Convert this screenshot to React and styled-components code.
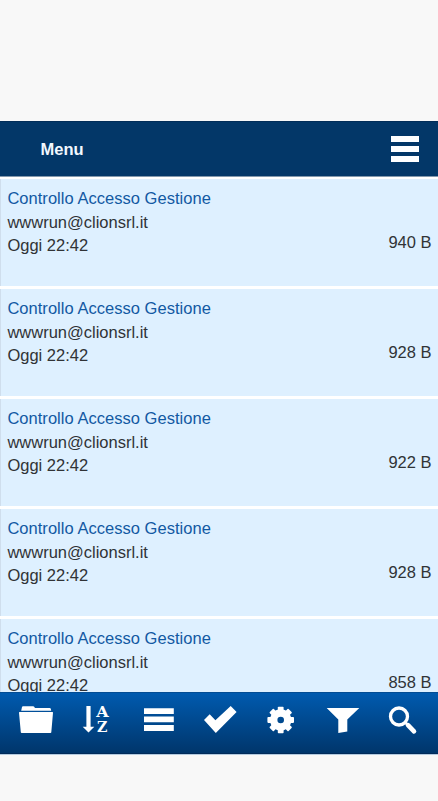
import React from "react";
import styled, { createGlobalStyle } from "styled-components";

const messages = [
  { id: 1, subject: "Controllo Accesso Gestione", from: "wwwrun@clionsrl.it", date: "Oggi 22:42", size: "940 B" },
  { id: 2, subject: "Controllo Accesso Gestione", from: "wwwrun@clionsrl.it", date: "Oggi 22:42", size: "928 B" },
  { id: 3, subject: "Controllo Accesso Gestione", from: "wwwrun@clionsrl.it", date: "Oggi 22:42", size: "922 B" },
  { id: 4, subject: "Controllo Accesso Gestione", from: "wwwrun@clionsrl.it", date: "Oggi 22:42", size: "928 B" },
  { id: 5, subject: "Controllo Accesso Gestione", from: "wwwrun@clionsrl.it", date: "Oggi 22:42", size: "858 B" },
];

const teeth = [0, 45, 90, 135, 180, 225, 270, 315];

const tools = [
  {
    name: "Cartelle",
    icon: (
      <>
        <path d="M16.2 18.8 L17 14.9 Q17.2 14.2 18 14.2 H28 Q29 14.2 29.4 15 L29.9 16 H44.6 Q45.6 16 45.8 16.8 L46.2 18.8 Z" />
        <path d="M14.6 20 H47.4 Q48.1 20 48 20.7 L46.3 40.3 Q46.2 41 45.5 41 H16.6 Q15.9 41 15.8 40.3 L14 20.7 Q13.9 20 14.6 20 Z" />
      </>
    ),
  },
  {
    name: "Ordina",
    icon: (
      <>
        <path d="M20.4 14 H24.6 V34.7 H28.3 L22.5 40.4 L16.7 34.7 H20.4 Z" />
        <Letter x="30.2" y="25.2" textLength="12.4">A</Letter>
        <Letter x="30.9" y="40" textLength="10.4">Z</Letter>
      </>
    ),
  },
  {
    name: "Elenco",
    icon: <path d="M17 16.3 h29.8 v5.8 h-29.8 z M17 24.5 h29.8 v5.8 h-29.8 z M17 33 h29.8 v6 h-29.8 z" />,
  },
  {
    name: "Seleziona",
    icon: <path d="M16 28 L21.7 22.3 L27.4 28.3 L42.7 14 L48.6 20 L27.8 41 Z" />,
  },
  {
    name: "Impostazioni",
    icon: (
      <>
        {teeth.map((angle) => (
          <rect key={angle} x="28.8" y="14.7" width="5.8" height="6" rx="0.8" transform={`rotate(${angle} 31.7 28)`} />
        ))}
        <circle cx="31.7" cy="28" r="7" fill="none" stroke="#fff" strokeWidth="7.4" />
      </>
    ),
  },
  {
    name: "Filtra",
    icon: <path d="M16.7 16 H49.3 L37.3 27.5 V39.4 L28.3 41 V27.5 Z" />,
  },
  {
    name: "Cerca",
    icon: (
      <>
        <circle cx="28" cy="24.5" r="8.5" fill="none" stroke="#fff" strokeWidth="3.3" />
        <path d="M34.3 30.5 L37 33" stroke="#fff" strokeWidth="2.6" />
        <path d="M37 33.2 L43 39.4" stroke="#fff" strokeWidth="4.6" strokeLinecap="round" />
      </>
    ),
  },
];

function Letter({ children, ...rest }) {
  return (
    <SortLetter lengthAdjust="spacingAndGlyphs" {...rest}>
      {children}
    </SortLetter>
  );
}

function Message({ subject, from, date, size }) {
  return (
    <Row>
      <Details>
        <Subject>{subject}</Subject>
        <p>{from}</p>
        <p>{date}</p>
      </Details>
      <Size>{size}</Size>
    </Row>
  );
}

function App() {
  return (
    <Page>
      <GlobalStyle />
      <Header>
        <Title>Menu</Title>
        <MenuButton aria-label="Menu">
          <span />
          <span />
          <span />
        </MenuButton>
      </Header>
      <List>
        {messages.map((message) => (
          <Message key={message.id} {...message} />
        ))}
      </List>
      <Toolbar>
        {tools.map((tool) => (
          <Tool key={tool.name} aria-label={tool.name}>
            <svg width="61" height="62" viewBox="0 0 61 62" fill="#fff">
              {tool.icon}
            </svg>
          </Tool>
        ))}
      </Toolbar>
    </Page>
  );
}

const GlobalStyle = createGlobalStyle`
  * {
    box-sizing: border-box;
  }
  body {
    margin: 0;
    background: #f8f8f8;
  }
  p, h1, h2 {
    margin: 0;
  }
`;
const Page = styled.div`
  display: flex;
  flex-direction: column;
  height: 801px;
  padding: 121px 0 47px;
  overflow: hidden;
  background: #f8f8f8;
  color: #303336;
  font-family: "Liberation Sans", Arial, sans-serif;
  font-size: 16.5px;
  line-height: 23.5px;
`;
const Header = styled.header`
  display: flex;
  flex: none;
  align-items: center;
  justify-content: space-between;
  height: 56px;
  padding: 0 19px 0 40.5px;
  background: #033768;
  border-top: 1px solid #022d58;
  border-bottom: 1px solid #8298ad;
`;
const Title = styled.h1`
  padding-top: 1px;
  color: #f2f8ff;
  font-size: 16.5px;
  font-weight: bold;
`;
const MenuButton = styled.button`
  display: flex;
  flex-direction: column;
  gap: 4px;
  width: 28px;
  padding: 0;
  border: 0;
  background: none;
  span {
    height: 6px;
    background: #fff;
  }
`;
const List = styled.main`
  flex: 1;
  min-height: 0;
  overflow: hidden;
  padding-top: 2px;
  background: #fff;
`;
const Row = styled.article`
  display: flex;
  justify-content: space-between;
  height: 107px;
  margin-bottom: 3px;
  padding: 8px 6.5px 0 6.4px;
  background: #def0ff;
  border-left: 1px solid #cfdeed;
`;
const Details = styled.div`
  display: flex;
  flex-direction: column;
`;
const Subject = styled.h2`
  color: #1259a3;
  font-size: inherit;
  font-weight: normal;
  letter-spacing: 0.03px;
`;
const Size = styled.span`
  padding-top: 44px;
`;
const Toolbar = styled.nav`
  display: grid;
  flex: none;
  grid-template-columns: repeat(7, 61px);
  height: 62px;
  padding-left: 5px;
  background: linear-gradient(#005bb0, #00356a);
  box-shadow: inset 0 1px #034d94, inset 0 -1px #022b59, 0 1px #b4cbe0;
`;
const Tool = styled.button`
  display: flex;
  padding: 0;
  border: 0;
  background: none;
`;
const SortLetter = styled.text`
  font-family: "DejaVu Serif", serif;
  font-size: 15px;
  font-weight: bold;
`;

export default App;
